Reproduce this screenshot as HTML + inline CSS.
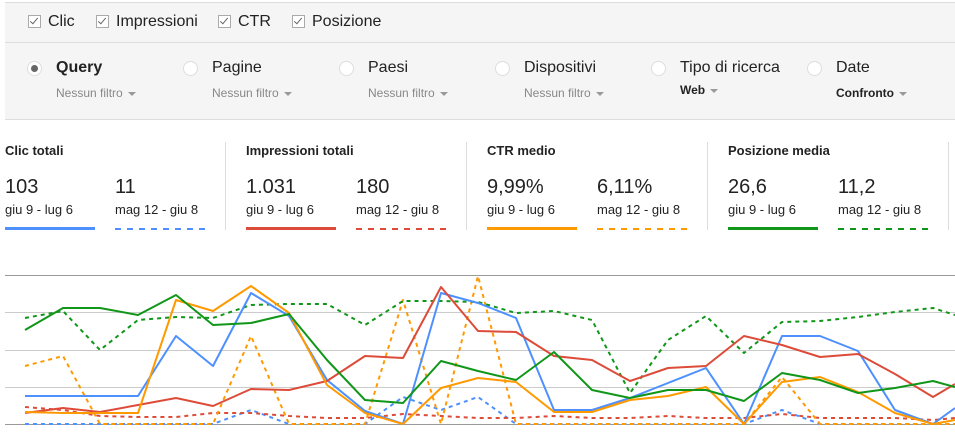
<!DOCTYPE html>
<html><head><meta charset="utf-8"><style>
body{margin:0;width:955px;height:433px;overflow:hidden;background:#fff;font-family:"Liberation Sans",Arial,sans-serif;position:relative}
.a{position:absolute;white-space:nowrap}
.top{position:absolute;left:5px;top:2px;width:950px;height:116px;background:#f5f5f5;border-top:1px solid #ddd;border-bottom:1px solid #ddd}
.sep{position:absolute;left:5px;top:42px;width:950px;border-top:1px solid #ddd}
.cb{position:absolute;top:15px;width:11px;height:11px;border:1px solid #aaa;background:#fff}
.cb:after{content:"";position:absolute;left:3px;top:0px;width:3px;height:7px;border-right:1.5px solid #666;border-bottom:1.5px solid #666;transform:rotate(40deg)}
.cl{font-size:16px;color:#222;top:13px}
.rd{position:absolute;top:61px;width:13px;height:13px;border-radius:50%;border:1px solid #ddd;background:#fff}
.dt{font-size:16px;color:#222;top:59px}
.sub{font-size:12px;color:#888;top:86px}
.sub b{color:#222}
.car{display:inline-block;border-left:4px solid transparent;border-right:4px solid transparent;border-top:4px solid #999;vertical-align:middle;margin-left:5px}
.h{font-size:13px;font-weight:bold;color:#222;top:143px}
.n{font-size:20px;color:#222;top:176px}
.d{font-size:13px;color:#222;top:202px}
.vl{position:absolute;top:142px;height:88px;border-left:1px solid #ddd}
.ln{position:absolute;top:227px;width:90px;height:3px}
.ds{position:absolute;top:228px;width:90px;height:2px}
</style></head><body>
<div class="top"></div><div class="sep"></div>
<div class="cb" style="left:28px"></div><div class="a cl" style="left:48px">Clic</div>
<div class="cb" style="left:96px"></div><div class="a cl" style="left:116px">Impressioni</div>
<div class="cb" style="left:218px"></div><div class="a cl" style="left:238px">CTR</div>
<div class="cb" style="left:292px"></div><div class="a cl" style="left:312px">Posizione</div>

<div class="rd" style="left:27px"><div style="position:absolute;left:3px;top:3px;width:7px;height:7px;border-radius:50%;background:#666"></div></div>
<div class="a dt" style="left:56px;font-weight:bold">Query</div><div class="a sub" style="left:56px">Nessun filtro<span class="car"></span></div>
<div class="rd" style="left:183px"></div><div class="a dt" style="left:212px">Pagine</div><div class="a sub" style="left:212px">Nessun filtro<span class="car"></span></div>
<div class="rd" style="left:339px"></div><div class="a dt" style="left:368px">Paesi</div><div class="a sub" style="left:368px">Nessun filtro<span class="car"></span></div>
<div class="rd" style="left:495px"></div><div class="a dt" style="left:524px">Dispositivi</div><div class="a sub" style="left:524px">Nessun filtro<span class="car"></span></div>
<div class="rd" style="left:651px"></div><div class="a dt" style="left:680px">Tipo di ricerca</div><div class="a sub" style="left:680px;top:83px"><b>Web</b><span class="car"></span></div>
<div class="rd" style="left:807px"></div><div class="a dt" style="left:836px">Date</div><div class="a sub" style="left:836px"><b>Confronto</b><span class="car"></span></div>

<div class="a h" style="left:5px">Clic totali</div>
<div class="a n" style="left:5px">103</div><div class="a d" style="left:5px">giu 9 - lug 6</div>
<div class="a n" style="left:115px">11</div><div class="a d" style="left:115px">mag 12 - giu 8</div>
<div class="ln" style="left:5px;background:#4d90fe"></div><div class="ds" style="left:115px;background:repeating-linear-gradient(90deg,#4d90fe 0 6px,transparent 6px 12px)"></div>
<div class="vl" style="left:225px"></div>
<div class="a h" style="left:246px">Impressioni totali</div>
<div class="a n" style="left:246px">1.031</div><div class="a d" style="left:246px">giu 9 - lug 6</div>
<div class="a n" style="left:356px">180</div><div class="a d" style="left:356px">mag 12 - giu 8</div>
<div class="ln" style="left:246px;background:#dd4b39"></div><div class="ds" style="left:356px;background:repeating-linear-gradient(90deg,#dd4b39 0 6px,transparent 6px 12px)"></div>
<div class="vl" style="left:466px"></div>
<div class="a h" style="left:487px">CTR medio</div>
<div class="a n" style="left:487px">9,99%</div><div class="a d" style="left:487px">giu 9 - lug 6</div>
<div class="a n" style="left:597px">6,11%</div><div class="a d" style="left:597px">mag 12 - giu 8</div>
<div class="ln" style="left:487px;background:#ff9900"></div><div class="ds" style="left:597px;background:repeating-linear-gradient(90deg,#ff9900 0 6px,transparent 6px 12px)"></div>
<div class="vl" style="left:707px"></div>
<div class="a h" style="left:728px">Posizione media</div>
<div class="a n" style="left:728px">26,6</div><div class="a d" style="left:728px">giu 9 - lug 6</div>
<div class="a n" style="left:838px">11,2</div><div class="a d" style="left:838px">mag 12 - giu 8</div>
<div class="ln" style="left:728px;background:#109618"></div><div class="ds" style="left:838px;background:repeating-linear-gradient(90deg,#109618 0 6px,transparent 6px 12px)"></div>
<div class="vl" style="left:948px"></div>

<svg class="a" style="left:0;top:0" width="955" height="433" viewBox="0 0 955 433">
<g stroke="#ccc" stroke-width="1"><line x1="5" y1="275.5" x2="955" y2="275.5" stroke="#999"/><line x1="5" y1="312.5" x2="955" y2="312.5"/><line x1="5" y1="350.5" x2="955" y2="350.5"/><line x1="5" y1="387.5" x2="955" y2="387.5"/><line x1="5" y1="424.5" x2="955" y2="424.5" stroke="#999"/></g>
<g fill="none" stroke-width="2" stroke-linejoin="round">
<polyline stroke="#4d90fe" stroke-dasharray="4,4" points="25,424 213,424 251,410 289,424 365,424 403,397 441,410 478,397 516,424 744,424 782,410 820,424 955,424"/>
<polyline stroke="#dd4b39" stroke-dasharray="4,4" points="25,407 63,410 100,416 138,417 176,417 213,413 251,413 289,416 327,418 365,418 403,414 441,416 478,418 516,418 554,416 592,418 630,418 668,416 706,418 744,418 782,414 820,418 858,418 895,418 933,420 955,418"/>
<polyline stroke="#ff9900" stroke-dasharray="4,4" points="25,366 63,356 100,424 213,424 251,336 289,424 365,424 403,300 441,424 478,276 516,424 744,424 782,377 820,424 955,424"/>
<polyline stroke="#109618" stroke-dasharray="4,4" points="25,318 63,311 100,350 138,320 176,317 213,318 251,305 289,304 327,304 365,325 403,301 441,301 478,302 516,313 554,311 592,320 630,393 668,340 706,316 744,353 782,322 820,321 858,317 895,312 933,308 955,315"/>
<polyline stroke="#4d90fe" points="25,396 63,396 100,396 138,396 176,336 213,366 251,293 289,316 327,380 365,411 403,424 441,293 478,303 516,318 554,410 592,410 630,398 668,383 706,368 744,424 782,336 820,336 858,351 895,410 933,424 955,408"/>
<polyline stroke="#dd4b39" points="25,413 63,408 100,412 138,405 176,398 213,406 251,389 289,390 327,381 365,356 403,358 441,287 478,331 516,332 554,356 592,360 630,381 668,368 706,366 744,336 782,345 820,357 858,354 895,374 933,397 955,384"/>
<polyline stroke="#ff9900" points="25,412 63,413 100,413 138,413 176,300 213,311 251,286 289,313 327,385 365,413 403,424 441,388 478,378 516,382 554,412 592,412 630,400 668,396 706,387 744,424 782,382 820,377 858,392 895,413 933,424 955,420"/>
<polyline stroke="#109618" points="25,330 63,308 100,308 138,315 176,295 213,325 251,323 289,314 327,360 365,400 403,403 441,361 478,371 516,380 554,352 592,390 630,398 668,390 706,390 744,401 782,373 820,380 858,393 895,388 933,381 955,387"/>
</g></svg>
</body></html>
